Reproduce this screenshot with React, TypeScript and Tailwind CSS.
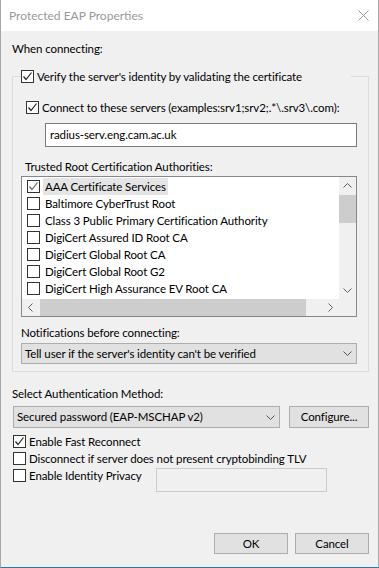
import React from 'react'

function Tick({ color = '#222' }: { color?: string }) {
  return (
    <svg width="11" height="11" viewBox="0 0 11 11">
      <polyline points="1.5,5.5 4,8.5 9.5,1.5" fill="none" stroke={color} strokeWidth="1.2" />
    </svg>
  )
}

function CheckBox({ checked = false, light = false }: { checked?: boolean; light?: boolean }) {
  return (
    <span className="flex h-[13px] w-[13px] shrink-0 items-center justify-center border border-[#333] bg-white">
      {checked && <Tick color={light ? '#666' : '#222'} />}
    </span>
  )
}

function Chevron({ dir = 'down', color = '#606060' }: { dir?: 'up' | 'down' | 'left' | 'right'; color?: string }) {
  const pts = {
    down: '0.5,0.5 4.5,4.5 8.5,0.5',
    up: '0.5,4.5 4.5,0.5 8.5,4.5',
    left: '4.5,0.5 0.5,4.5 4.5,8.5',
    right: '0.5,0.5 4.5,4.5 0.5,8.5',
  }[dir]
  const horizontal = dir === 'up' || dir === 'down'
  return (
    <svg width={horizontal ? 9 : 5} height={horizontal ? 5 : 9} viewBox={horizontal ? '0 0 9 5' : '0 0 5 9'}>
      <polyline points={pts} fill="none" stroke={color} strokeWidth="1" />
    </svg>
  )
}

const certificates = [
  'AAA Certificate Services',
  'Baltimore CyberTrust Root',
  'Class 3 Public Primary Certification Authority',
  'DigiCert Assured ID Root CA',
  'DigiCert Global Root CA',
  'DigiCert Global Root G2',
  'DigiCert High Assurance EV Root CA',
]

export default function App() {
  return (
    <div className="flex h-[568px] w-[379px] flex-col border-x border-b border-x-[#a8a8a8] border-b-[#2b78ab] bg-[#f0f0f0] font-['Lato',sans-serif] text-[11.5px] tracking-[-0.1px] text-black">
      {/* Title bar */}
      <div className="flex h-[31px] shrink-0 items-center justify-between bg-white pl-[8px] pr-[9px]">
        <span className="text-[12px] tracking-normal text-[#999]">Protected EAP Properties</span>
        <svg width="11" height="11" viewBox="0 0 11 11">
          <path d="M0.5 0.5 L10.5 10.5 M10.5 0.5 L0.5 10.5" stroke="#999" strokeWidth="1" />
        </svg>
      </div>

      <div className="flex flex-1 flex-col pl-[11px] pr-[9px]">
        <div className="mt-[9px] h-[17px] leading-[17px]">When connecting:</div>

        {/* Group */}
        <fieldset className="mt-[13px] border border-[#dcdcdc] pb-[7px]">
          <legend className="ml-[8px] flex h-[13px] w-[330px] items-center gap-[3px] leading-[13px]">
            <CheckBox checked />
            <span>Verify the server's identity by validating the certificate</span>
          </legend>

          <div className="ml-[13px] mt-[18px] flex h-[13px] items-center gap-[3px] leading-[13px]">
            <CheckBox checked />
            <span className="whitespace-nowrap">Connect to these servers (examples:srv1;srv2;.*\.srv3\.com):</span>
          </div>

          <div className="ml-[32px] mt-[9px] flex h-[24px] w-[312px] items-center border border-[#7a7a7a] bg-white pl-[4px]">
            radius-serv.eng.cam.ac.uk
          </div>

          <div className="ml-[12px] mt-[11px] h-[17px] leading-[17px]">Trusted Root Certification Authorities:</div>

          {/* Certificate list */}
          <div className="ml-[8px] mt-[1px] flex h-[141px] w-[336px] flex-col border border-[#828790] bg-white">
            <div className="flex h-[122px]">
              <div className="flex-1 pt-[1px]">
                {certificates.map((name, i) => (
                  <div key={name} className="flex h-[17px] items-center pl-[5px] leading-[17px]">
                    <CheckBox checked={i === 0} light />
                    <span className={`ml-[3px] h-[17px] px-[2px] whitespace-nowrap ${i === 0 ? 'bg-[#e5e5e5]' : ''}`}>
                      {name}
                    </span>
                  </div>
                ))}
              </div>
              <div className="flex w-[17px] flex-col bg-[#f0f0f0]">
                <div className="flex h-[17px] items-center justify-center">
                  <Chevron dir="up" />
                </div>
                <div className="flex-1">
                  <div className="mt-[1px] h-[28px] bg-[#cdcdcd]" />
                </div>
                <div className="flex h-[17px] items-center justify-center">
                  <Chevron dir="down" />
                </div>
              </div>
            </div>
            <div className="flex h-[17px] bg-[#f0f0f0]">
              <div className="flex w-[17px] items-center justify-center">
                <Chevron dir="left" />
              </div>
              <div className="ml-[1px] w-[266px] bg-[#cdcdcd]" />
              <div className="flex-1" />
              <div className="flex w-[17px] items-center justify-center">
                <Chevron dir="right" />
              </div>
              <div className="w-[17px]" />
            </div>
          </div>

          <div className="ml-[8px] mt-[7px] h-[17px] leading-[17px]">Notifications before connecting:</div>

          <div className="ml-[8px] mt-[2px] flex h-[21px] w-[336px] items-center justify-between border border-[#adadad] bg-[#e1e1e1] pl-[3px] pr-[4px]">
            <span>Tell user if the server's identity can't be verified</span>
            <Chevron dir="down" color="#555" />
          </div>
        </fieldset>

        <div className="mt-[13px] h-[17px] leading-[17px]">Select Authentication Method:</div>

        <div className="ml-[1px] mt-[4px] flex h-[22px] gap-[9px]">
          <div className="flex w-[267px] items-center justify-between border border-[#adadad] bg-[#e1e1e1] pl-[3px] pr-[4px]">
            <span>Secured password (EAP-MSCHAP v2)</span>
            <Chevron dir="down" color="#555" />
          </div>
          <button className="w-[80px] border border-[#adadad] bg-[#e1e1e1]">Configure...</button>
        </div>

        <div className="ml-[1px] mt-[7px] flex h-[13px] items-center gap-[3px] leading-[13px]">
          <CheckBox checked />
          <span>Enable Fast Reconnect</span>
        </div>
        <div className="ml-[1px] mt-[4px] flex h-[13px] items-center gap-[3px] leading-[13px]">
          <CheckBox />
          <span className="whitespace-nowrap">Disconnect if server does not present cryptobinding TLV</span>
        </div>
        <div className="ml-[1px] mt-[3px] flex h-[24px] items-start">
          <div className="mt-[1px] flex h-[13px] w-[143px] items-center gap-[3px] leading-[13px]">
            <CheckBox />
            <span className="whitespace-nowrap">Enable Identity Privacy</span>
          </div>
          <div className="h-[24px] w-[171px] border border-[#cccccc] bg-[#f0f0f0]" />
        </div>

        <div className="mt-[41px] flex justify-end gap-[7px]">
          <button className="h-[21px] w-[74px] border border-[#adadad] bg-[#e1e1e1]">OK</button>
          <button className="h-[21px] w-[74px] border border-[#adadad] bg-[#e1e1e1]">Cancel</button>
        </div>
      </div>
    </div>
  )
}
